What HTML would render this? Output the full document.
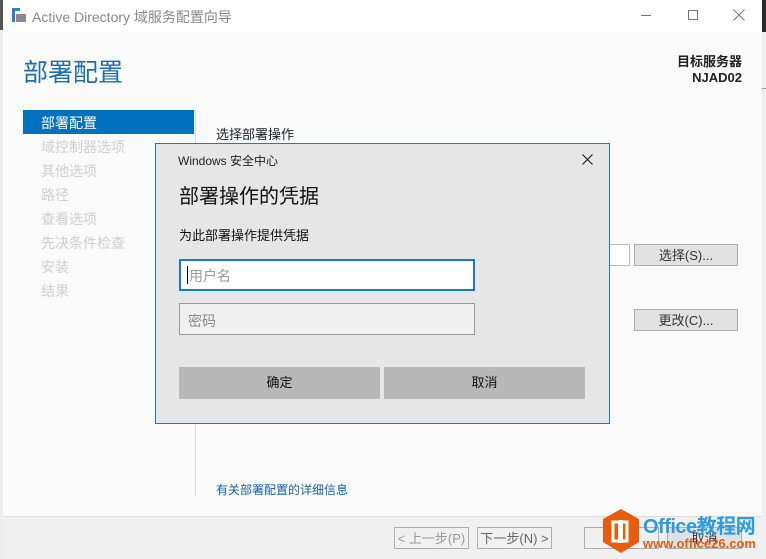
<!DOCTYPE html>
<html><head><meta charset="utf-8"><style>
*{margin:0;padding:0;box-sizing:border-box}
html,body{width:766px;height:559px;overflow:hidden}
body{background:#2b2b2b;font-family:"Liberation Sans","Noto Sans CJK SC",sans-serif;position:relative}
.a{position:absolute;white-space:nowrap}
.win{left:3px;top:0;width:759px;height:559px;background:#fafafa}
.title{left:3px;top:0;width:759px;height:31px;background:#fff}
.nav{font-size:14px;color:#cfcfcf;left:41px}
.btn{border:1px solid #adadad;background:#e1e1e1;font-size:13px;color:#333;text-align:center;line-height:21px}
</style></head><body>
<div class="a" style="left:762px;top:32px;width:4px;height:527px;background:#f0f0f0"></div>
<div class="a" style="left:762px;top:88px;width:4px;height:1px;background:#999"></div>
<div class="a win"></div>
<div class="a title"></div>
<div class="a" style="left:0;top:0;width:3px;height:559px;background:#555"></div>
<div class="a" style="left:0;top:30px;width:3px;height:529px;background:#eee"></div>
<div class="a" style="left:12px;top:8px;width:3px;height:14px;background:#2a7ed2"></div>
<div class="a" style="left:12px;top:8px;width:8px;height:3px;background:#2a7ed2"></div>
<div class="a" style="left:16px;top:14px;width:10px;height:8px;background:#8a8a8a"></div>
<div class="a" style="left:32px;top:7px;font-size:14px;color:#888">Active Directory 域服务配置向导</div>
<div class="a" style="left:641px;top:15px;width:10px;height:1px;background:#777"></div>
<div class="a" style="left:688px;top:10px;width:10px;height:10px;border:1px solid #777"></div>
<svg class="a" style="left:733px;top:9px" width="12" height="12"><path d="M0.5 0.5L11.5 11.5M11.5 0.5L0.5 11.5" stroke="#777" stroke-width="1"/></svg>
<div class="a" style="left:23px;top:53px;font-size:25px;color:#1b6fb0">部署配置</div>
<div class="a" style="left:600px;top:54px;width:142px;text-align:right;font-size:13px;font-weight:bold;color:#222;line-height:16px">目标服务器<br>NJAD02</div>
<div class="a" style="left:23px;top:110px;width:171px;height:24px;background:#0072bd"></div>
<div class="a" style="left:41px;top:113px;font-size:14px;color:#fff">部署配置</div>
<div class="a nav" style="top:137px">域控制器选项</div>
<div class="a nav" style="top:161px">其他选项</div>
<div class="a nav" style="top:185px">路径</div>
<div class="a nav" style="top:209px">查看选项</div>
<div class="a nav" style="top:233px">先决条件检查</div>
<div class="a nav" style="top:257px">安装</div>
<div class="a nav" style="top:281px">结果</div>
<div class="a" style="left:195px;top:110px;width:1px;height:386px;background:#ddd"></div>
<div class="a" style="left:216px;top:124px;font-size:13px;color:#222">选择部署操作</div>
<div class="a" style="left:560px;top:244px;width:70px;height:22px;background:#fff;border:1px solid #bbb"></div>
<div class="a btn" style="left:634px;top:244px;width:104px;height:22px">选择(S)...</div>
<div class="a btn" style="left:634px;top:309px;width:104px;height:22px">更改(C)...</div>
<div class="a" style="left:216px;top:481px;font-size:12px;color:#1a5fa8">有关部署配置的详细信息</div>
<div class="a" style="left:3px;top:516px;width:759px;height:43px;background:#f0f0f0;border-top:1px solid #ddd"></div>
<div class="a btn" style="left:394px;top:527px;width:75px;height:22px;color:#999;background:#f0f0f0">&lt; 上一步(P)</div>
<div class="a btn" style="left:477px;top:527px;width:75px;height:22px;color:#666;background:#f0f0f0">下一步(N) &gt;</div>
<div class="a btn" style="left:584px;top:527px;width:75px;height:22px;background:#f0f0f0"></div>
<div class="a btn" style="left:667px;top:527px;width:75px;height:22px">取消</div>
<svg class="a" style="left:602px;top:509px" width="38" height="44" viewBox="0 0 38 44"><polygon points="19,0 37,10 37,33 19,44 1,33 1,10" fill="#e85d0c"/><rect x="11" y="13" width="14" height="19" fill="none" stroke="#fff" stroke-width="3"/><rect x="16" y="11" width="5" height="23" fill="#fff"/></svg>
<div class="a" style="left:643px;top:510px;font-size:20px;font-weight:bold;color:#2c9be0;letter-spacing:-0.5px">Office教程网</div>
<div class="a" style="left:643px;top:536px;font-size:13px;font-weight:bold;color:#e85d0c">www.office26.com</div>
<div class="a" style="left:155px;top:143px;width:455px;height:281px;background:#e6e6e6;border:1px solid #1979ca"></div>
<div class="a" style="left:178px;top:152px;font-size:12px;color:#222">Windows 安全中心</div>
<svg class="a" style="left:582px;top:154px" width="11" height="11"><path d="M0.5 0.5L10.5 10.5M10.5 0.5L0.5 10.5" stroke="#222" stroke-width="1.2"/></svg>
<div class="a" style="left:179px;top:180px;font-size:20px;color:#111">部署操作的凭据</div>
<div class="a" style="left:179px;top:225px;font-size:13px;color:#111">为此部署操作提供凭据</div>
<div class="a" style="left:179px;top:259px;width:296px;height:32px;background:#fff;border:2px solid #1979ca"></div>
<div class="a" style="left:187px;top:266px;width:1px;height:18px;background:#000"></div>
<div class="a" style="left:189px;top:266px;font-size:14px;color:#999">用户名</div>
<div class="a" style="left:179px;top:303px;width:296px;height:32px;background:#f0f0f0;border:1px solid #999"></div>
<div class="a" style="left:188px;top:311px;font-size:14px;color:#888">密码</div>
<div class="a" style="left:179px;top:367px;width:201px;height:32px;background:#b8b8b8;font-size:13px;text-align:center;line-height:32px;color:#111">确定</div>
<div class="a" style="left:384px;top:367px;width:201px;height:32px;background:#b8b8b8;font-size:13px;text-align:center;line-height:32px;color:#111">取消</div>
</body></html>
